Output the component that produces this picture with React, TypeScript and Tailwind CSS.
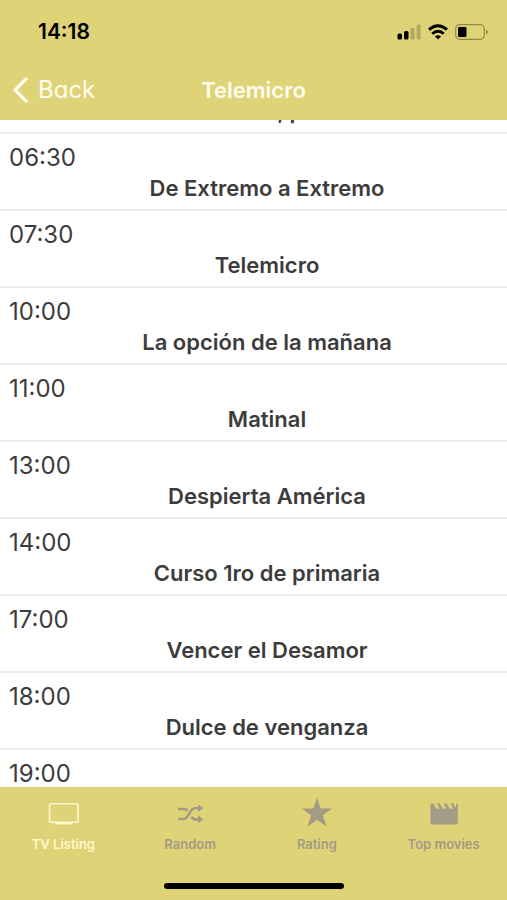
import type { ReactNode } from "react";

interface Program {
  time?: string;
  title: string;
}

interface Tab {
  label: string;
  icon: ReactNode;
  active?: boolean;
}

const programs: Program[] = [
  { title: "Música, país" },
  { time: "06:30", title: "De Extremo a Extremo" },
  { time: "07:30", title: "Telemicro" },
  { time: "10:00", title: "La opción de la mañana" },
  { time: "11:00", title: "Matinal" },
  { time: "13:00", title: "Despierta América" },
  { time: "14:00", title: "Curso 1ro de primaria" },
  { time: "17:00", title: "Vencer el Desamor" },
  { time: "18:00", title: "Dulce de venganza" },
  { time: "19:00", title: "" },
];

const tabs: Tab[] = [
  { label: "TV Listing", icon: <TvIcon />, active: true },
  { label: "Random", icon: <ShuffleIcon /> },
  { label: "Rating", icon: <StarIcon /> },
  { label: "Top movies", icon: <ClapperIcon /> },
];

function TvIcon() {
  return (
    <svg className="h-8 w-8" viewBox="0 0 32 32" fill="none" aria-hidden="true">
      <rect x="2.5" y="6.8" width="28.5" height="18.5" rx="1" stroke="currentColor" strokeWidth="1.6" />
      <path d="M8 26.6H25.5" stroke="currentColor" strokeWidth="1.8" />
    </svg>
  );
}

function ShuffleIcon() {
  return (
    <svg className="h-8 w-8" viewBox="0 0 32 32" fill="none" aria-hidden="true">
      <path
        d="M4 12H10C11.8 12 12.9 12.7 13.7 13.8M4 22H9.5C15.8 22 14.8 11.3 21 11.3H25M17.4 19.6C18.4 21.6 19.6 22.4 21.5 22.4H25"
        stroke="currentColor"
        strokeWidth="2.5"
      />
      <path d="M24 7.5L29.3 11.3L24 15.1ZM24 18.6L29.3 22.4L24 26.2Z" fill="currentColor" />
    </svg>
  );
}

function StarIcon() {
  return (
    <svg className="h-8 w-8" viewBox="0 0 32 32" fill="currentColor" aria-hidden="true">
      <path d="M16 0.5L19.7 11.5H31.2L21.9 18.3L25.6 29.8L16 22.7L6.4 29.8L10.1 18.3L0.8 11.5H12.3Z" />
    </svg>
  );
}

function ClapperIcon() {
  return (
    <svg className="h-8 w-8" viewBox="0 0 32 32" fill="currentColor" aria-hidden="true">
      <path d="M4 6.2H5L8.2 11.8H11.5L9 6.2H11.5L15 11.8H18.3L15.8 6.2H18.2L21.8 11.8H25L22.6 6.2H25L28 11.2V6.2Q29.8 6.2 29.8 7.8V25.5Q29.8 27.5 27.8 27.5H4.5Q2.5 27.5 2.5 25.5V7.7Q2.5 6.2 4 6.2Z" />
    </svg>
  );
}

function StatusBar() {
  return (
    <div className="flex h-16 items-center justify-between pr-[19px] pl-[38px]">
      <span className="text-[21px] font-semibold text-black">14:18</span>
      <div className="flex items-center gap-[7px] text-black">
        <svg width="24" height="16" viewBox="0 0 24 16" fill="currentColor" aria-hidden="true">
          <rect x="0.5" y="9.5" width="4.5" height="6" rx="1.5" />
          <rect x="7" y="7" width="4.5" height="8.5" rx="1.5" />
          <rect x="13.5" y="4" width="4.2" height="11.5" rx="1" opacity="0.2" />
          <rect x="19.5" y="0.5" width="4.2" height="15" rx="1" opacity="0.2" />
        </svg>
        <svg width="20" height="16" viewBox="0 0 20 16" fill="none" aria-hidden="true">
          <path d="M1 5.7Q10 -2.3 19 5.7" stroke="currentColor" strokeWidth="3" />
          <path d="M4.2 9.8Q10 4.6 15.8 9.8" stroke="currentColor" strokeWidth="2.8" />
          <path d="M7 12.6Q10 10 13 12.6L10 15.6Z" fill="currentColor" />
        </svg>
        <svg width="33" height="16" viewBox="0 0 33 16" fill="none" aria-hidden="true">
          <rect x="0.7" y="0.7" width="28.6" height="14.6" rx="4" stroke="#938a48" strokeWidth="1.2" />
          <rect x="3" y="3" width="8.5" height="10" rx="1.2" fill="currentColor" />
          <path d="M31 5.5Q35 8 31 10.5Z" fill="#938a48" />
        </svg>
      </div>
    </div>
  );
}

function Header() {
  return (
    <header className="shrink-0 bg-[#dfd377]">
      <StatusBar />
      <div className="grid h-14 grid-cols-[1fr_auto_1fr] items-center px-3 pb-1 text-[#fffdf0]">
        <button type="button" className="flex items-center gap-[10px] justify-self-start">
          <svg width="16" height="26" viewBox="0 0 16 26" fill="none" aria-hidden="true">
            <path d="M14 2L3 13L14 24" stroke="currentColor" strokeWidth="3.2" strokeLinecap="round" />
          </svg>
          <span className="text-2xl [font-feature-settings:'cv11']">Back</span>
        </button>
        <h1 className="text-[22px] font-semibold">Telemicro</h1>
      </div>
    </header>
  );
}

function ProgramRow({ time, title }: Program) {
  return (
    <li className="flex h-[77px] flex-col border-b-2 border-[#ececec] pt-2 pr-2 pl-[9px] text-[#3c3c3c]">
      {time ? <time className="h-8 text-2xl">{time}</time> : <div className="h-8" />}
      <p className="pl-[26px] text-center text-[22px] leading-7 font-semibold">{title}</p>
    </li>
  );
}

function TabBar() {
  return (
    <nav className="shrink-0 bg-[#dfd377]">
      <div className="grid h-24 grid-cols-4">
        {tabs.map(({ label, icon, active }) => (
          <button
            key={label}
            type="button"
            className={`flex flex-col items-center justify-start gap-[7px] pt-[10px] text-[13px] leading-4 font-semibold ${
              active ? "text-[#fff7cf]" : "text-[#a29b85]"
            }`}
          >
            {icon}
            {label}
          </button>
        ))}
      </div>
      <div className="flex h-[17px] justify-center">
        <div className="h-[6px] w-[180px] rounded-full bg-black" />
      </div>
    </nav>
  );
}

export default function App() {
  return (
    <div className="flex h-screen flex-col bg-white font-['Inter','Liberation_Sans',sans-serif]">
      <Header />
      <main className="min-h-0 flex-1 overflow-hidden">
        {/* list is scrolled part way into the first programme */}
        <ul className="-mt-[63px]">
          {programs.map((program) => (
            <ProgramRow key={program.time ?? program.title} {...program} />
          ))}
        </ul>
      </main>
      <TabBar />
    </div>
  );
}
